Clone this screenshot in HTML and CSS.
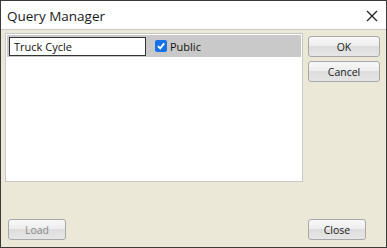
FILE: index.html
```html
<!DOCTYPE html>
<html>
<head>
<meta charset="utf-8">
<link rel="stylesheet" href="styles.css">
</head>
<body>
<div class="dialog">
  <div class="titlebar">
    <span class="title">Query Manager</span>
    <svg class="close-x" width="12" height="12" viewBox="0 0 12 12"><path d="M1 1 L11 11 M11 1 L1 11" stroke="#222" stroke-width="1.3" fill="none"/></svg>
  </div>
  <div class="content">
    <div class="main">
      <div class="list">
        <div class="row selected">
          <div class="name-input">Truck Cycle</div>
          <label class="public">
            <span class="checkbox"><svg width="10" height="10" viewBox="0 0 10 10"><path d="M2 5.2 L4.2 7.4 L8.2 2.4" stroke="#fff" stroke-width="1.8" fill="none"/></svg></span>
            <span>Public</span>
          </label>
        </div>
      </div>
      <div class="side">
        <button class="btn wide">OK</button>
        <button class="btn wide">Cancel</button>
      </div>
    </div>
    <div class="footer">
      <button class="btn small disabled">Load</button>
      <button class="btn small">Close</button>
    </div>
  </div>
</div>
</body>
</html>
```
FILE: styles.css
```css
html, body {
  margin: 0;
  padding: 0;
  background: #fff;
}
body {
  font-family: "Open Sans", "Noto Sans", sans-serif;
}
.dialog {
  width: 387px;
  height: 248px;
  box-sizing: border-box;
  border: 1px solid #3a3a3a;
  display: flex;
  flex-direction: column;
  background: #ebe8d8;
}
.titlebar {
  height: 28px;
  background: #fff;
  border-bottom: 1px solid #c9c9c9;
  display: flex;
  align-items: center;
  justify-content: space-between;
  padding: 0 8px 0 6px;
}
.title {
  font-size: 13.5px;
  color: #1a1a1a;
  margin-top: 1px;
}
.close-x {
  margin-top: 1px;
}
.content {
  flex: 1;
  display: flex;
  flex-direction: column;
  justify-content: space-between;
  padding: 3px 6px 7px 4px;
}
.main {
  display: flex;
  align-items: flex-start;
}
.list {
  width: 298px;
  height: 149px;
  box-sizing: border-box;
  background: #fff;
  border: 1px solid #c8c8c8;
  padding: 1px;
}
.row.selected {
  height: 22px;
  background: #c9c9c9;
  display: flex;
  align-items: center;
  padding-left: 2px;
}
.name-input {
  width: 137px;
  height: 19px;
  box-sizing: border-box;
  background: #fff;
  border: 1px solid #333;
  font-size: 11px;
  line-height: 17px;
  padding-left: 4px;
  color: #111;
}
.public {
  display: flex;
  align-items: center;
  margin-left: 9px;
  font-size: 11px;
  color: #111;
}
.checkbox {
  width: 12px;
  height: 12px;
  background: #1672e6;
  border-radius: 2px;
  display: flex;
  align-items: center;
  justify-content: center;
  margin-right: 3px;
}
.side {
  display: flex;
  flex-direction: column;
  gap: 4px;
  margin-left: 5px;
  margin-top: 3px;
}
.btn {
  font-family: "Open Sans", "Noto Sans", sans-serif;
  font-size: 10.5px;
  color: #222;
  height: 21px;
  box-sizing: border-box;
  border: 1px solid #a8a8a8;
  border-radius: 3px;
  background: linear-gradient(#f8f8f8 0%, #eeeeee 45%, #dddddd 50%, #e6e6e6 100%);
  padding: 0;
  margin: 0;
}
.btn.wide {
  width: 72px;
}
.btn.small {
  width: 58px;
}
.btn.disabled {
  color: #8a8a8a;
}
.footer {
  display: flex;
  justify-content: space-between;
  padding-left: 3px;
  padding-right: 14px;
}
```
